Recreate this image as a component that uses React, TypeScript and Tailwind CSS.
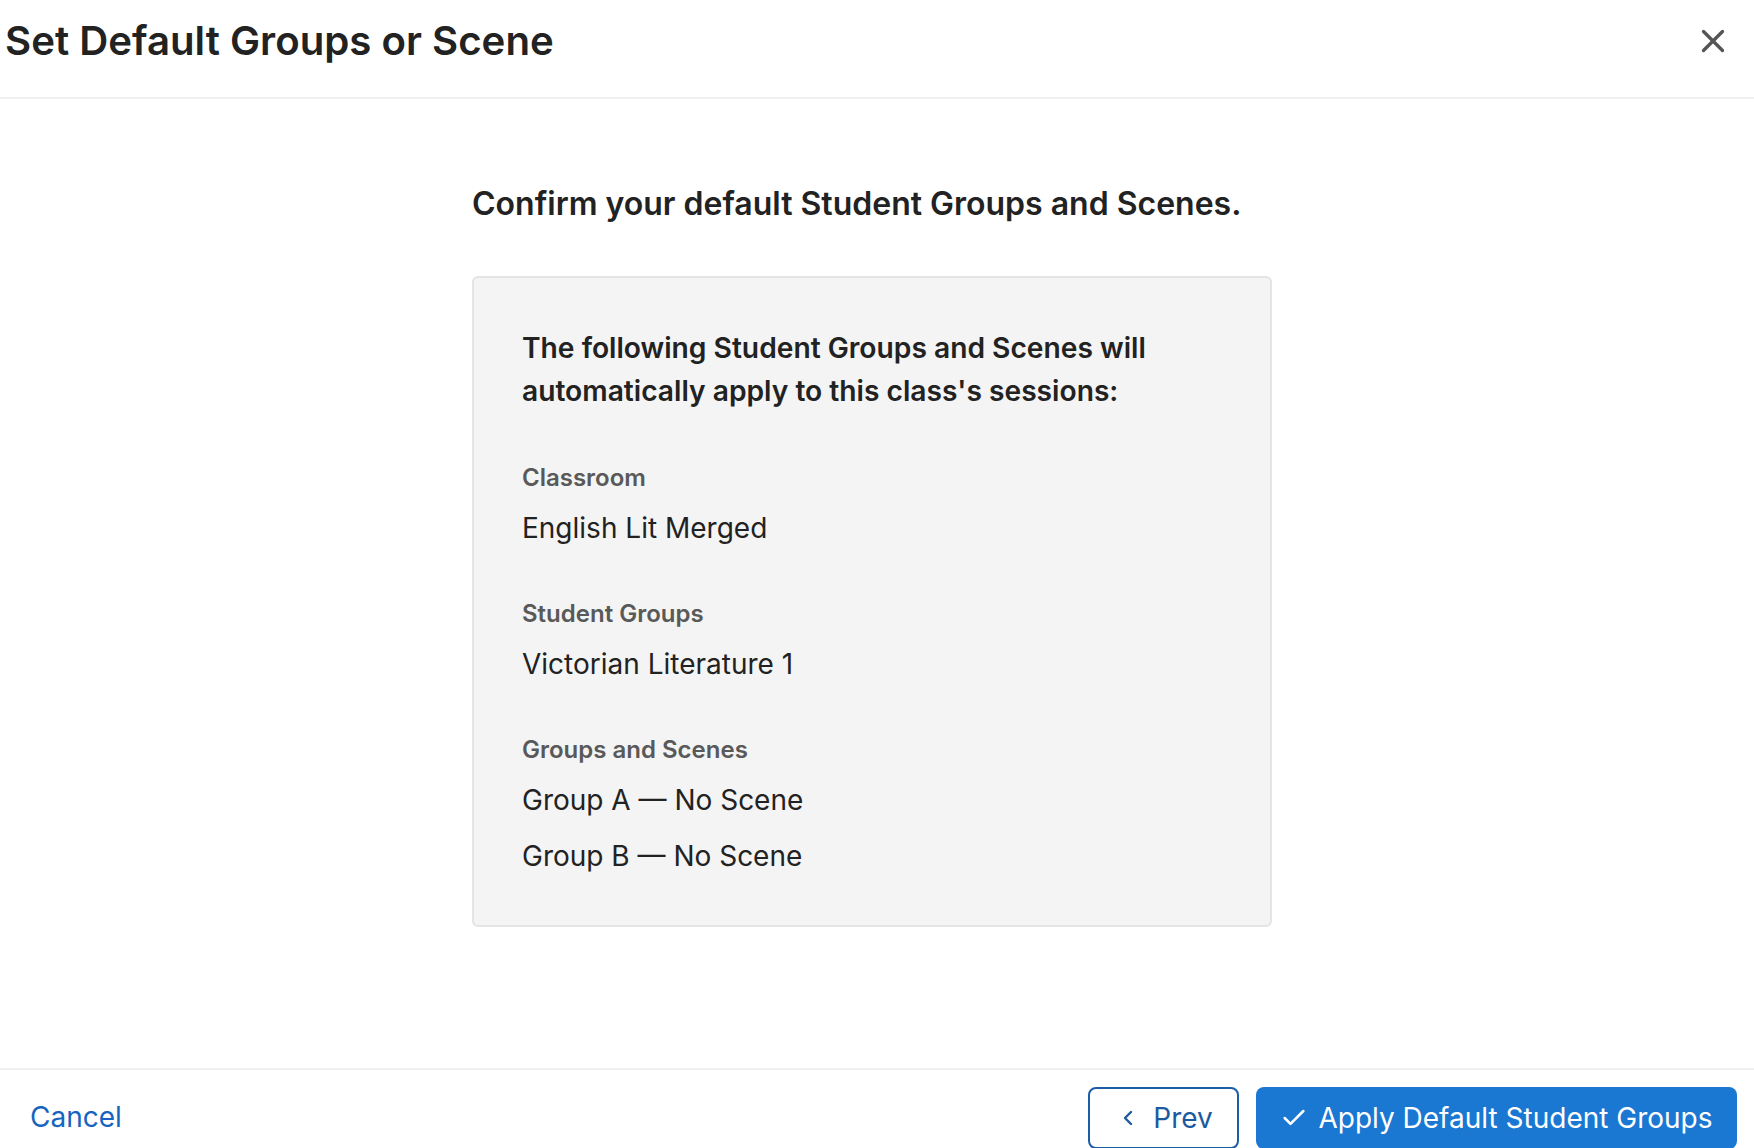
import { X, Check, ChevronLeft } from 'lucide-react';

const sections = [
  { label: 'Classroom', values: ['English Lit Merged'] },
  { label: 'Student Groups', values: ['Victorian Literature 1'] },
  { label: 'Groups and Scenes', values: ['Group A — No Scene', 'Group B — No Scene'] },
];

export default function App() {
  return (
    <div
      className="flex h-screen flex-col overflow-hidden bg-white text-[#222]"
      style={{ fontFamily: 'Inter, "Noto Sans", sans-serif' }}
    >
      {/* Header */}
      <header className="flex h-[99px] shrink-0 items-center justify-between border-b-2 border-[#efefef] pb-[15px] pl-[5px] pr-[22px]">
        <h1 className="text-[40.2px] font-semibold leading-none text-[#222]">
          Set Default Groups or Scene
        </h1>
        <button type="button" aria-label="Close" className="text-[#555]">
          <X size={38} strokeWidth={2.1} />
        </button>
      </header>

      {/* Body */}
      <main className="flex-1">
        <div className="ml-[472px] w-[800px] pt-[87px]">
          <h2 className="text-[32px] font-semibold leading-[36px]">
            Confirm your default Student Groups and Scenes.
          </h2>

          <div className="mt-[54px] h-[651px] rounded-[6px] border-2 border-[#e4e4e4] bg-[#f4f4f4] px-[48px] pt-[49px]">
            <p className="text-[28.2px] font-semibold leading-[43px]">
              The following Student Groups and Scenes will
              <br />
              automatically apply to this class's sessions:
            </p>

            {sections.map((s, idx) => (
              <div key={s.label} className={idx === 0 ? 'mt-[48px]' : 'mt-[49px]'}>
                <div className="text-[24px] font-semibold leading-[34px] text-[#595959]">{s.label}</div>
                {s.values.map((v, i) => (
                  <div
                    key={v}
                    className={`text-[28px] leading-[40px] text-[#222] ${i === 0 ? 'mt-[13px]' : 'mt-[16px]'}`}
                  >
                    {v}
                  </div>
                ))}
              </div>
            ))}
          </div>
        </div>
      </main>

      {/* Footer */}
      <footer className="flex h-[80px] shrink-0 items-start justify-between border-t-2 border-[#efefef] pl-[30px] pr-[17px] pt-[17px]">
        <button type="button" className="mt-[10px] text-[28px] leading-[40px] text-[#1565c0]">
          Cancel
        </button>
        <div className="flex gap-[17px]">
          <button
            type="button"
            className="flex h-[62px] w-[151px] items-center justify-center gap-[13px] rounded-[8px] border-2 border-[#1b5ea6] pl-[2px] text-[28px] text-[#1b5aa0]"
          >
            <ChevronLeft size={24} strokeWidth={2.4} />
            Prev
          </button>
          <button
            type="button"
            className="flex h-[62px] w-[481px] items-center justify-center gap-[10px] rounded-[8px] bg-[#1a77d2] text-[28px] text-white"
          >
            <Check size={28} strokeWidth={2.2} />
            Apply Default Student Groups
          </button>
        </div>
      </footer>
    </div>
  );
}
